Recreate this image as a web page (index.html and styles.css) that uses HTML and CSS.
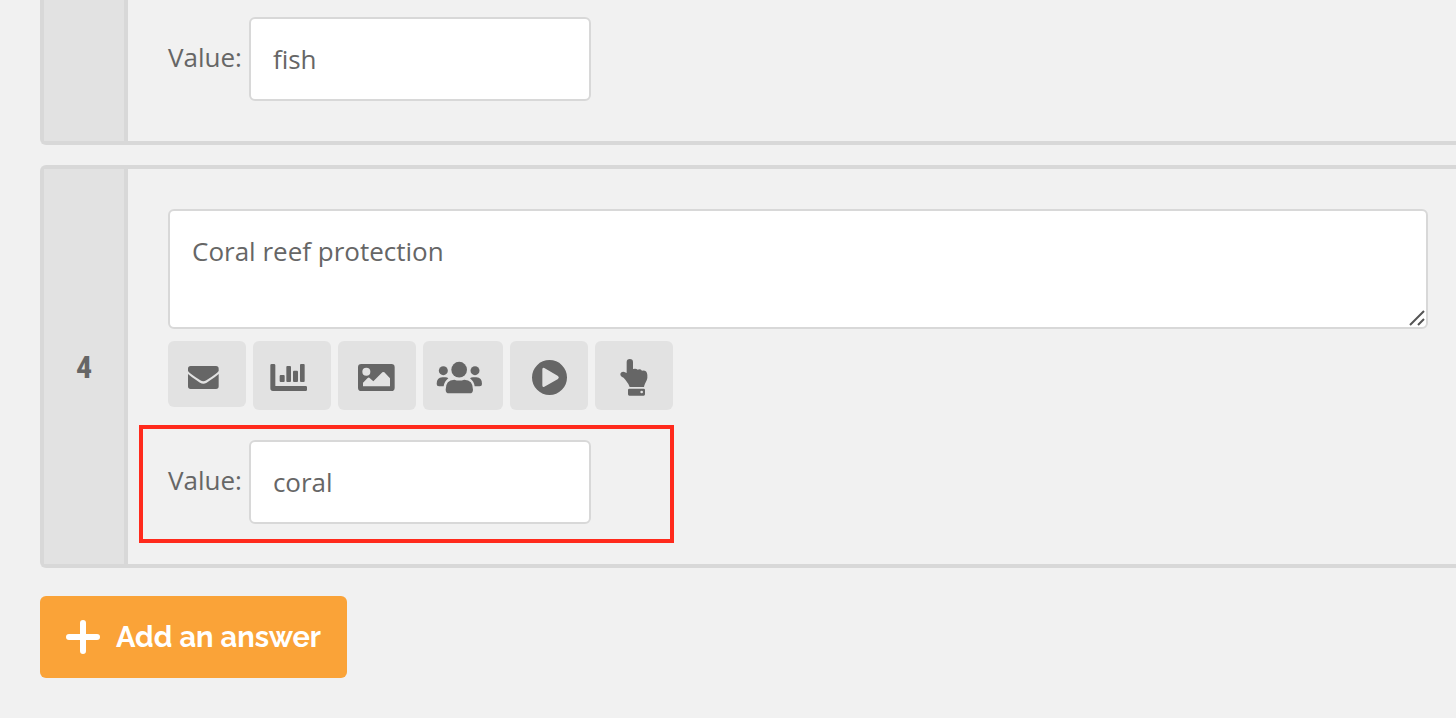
FILE: index.html
```html
<!DOCTYPE html>
<html lang="en">
<head>
<meta charset="utf-8">
<title>Answers</title>
<link rel="stylesheet" href="styles.css">
</head>
<body>
<main class="answers">
  <section class="answer answer-scrolled">
    <div class="answer-number"></div>
    <div class="answer-body">
      <div class="value-row">
        <label for="value-3">Value:</label>
        <input class="field value-input" id="value-3" type="text" value="fish">
      </div>
    </div>
  </section>

  <section class="answer">
    <div class="answer-number">4</div>
    <div class="answer-body">
      <div class="text-wrap">
        <textarea class="field answer-text" aria-label="Answer 4">Coral reef protection</textarea>
        <svg class="grip" viewBox="0 0 16 16" aria-hidden="true"><path d="M1 15L15 1M9 15l6-6"/></svg>
      </div>
      <div class="tools">
        <button class="tool tool-mail" type="button" aria-label="Email">
          <svg viewBox="24 18 234 198"><path d="M84 108V101Q84 93 92 93H168Q176 93 176 101V108Q172 115 139 136Q130 142 121 136Q88 115 84 108Z"/><path d="M84 117Q90 123 120 143Q130 149 140 143Q170 123 176 117V154Q176 162 168 162H92Q84 162 84 154Z"/></svg>
        </button>
        <button class="tool" type="button" aria-label="Chart">
          <svg viewBox="279 18 234 207"><path d="M331 91Q331 87 335 87H342Q346 87 346 91V153H437Q441 153 441 157V164Q441 168 437 168H339Q331 168 331 160Z"/><rect x="359" y="120" width="15" height="21" rx="3"/><rect x="379" y="93" width="14" height="48" rx="3"/><rect x="399" y="107" width="15" height="34" rx="3"/><rect x="420" y="87" width="14" height="54" rx="3"/></svg>
        </button>
        <button class="tool" type="button" aria-label="Image">
          <svg viewBox="537 18 234 207"><path fill-rule="evenodd" d="M607 87H697Q707 87 707 97V158Q707 168 697 168H607Q597 168 597 158V97Q597 87 607 87ZM622 98.500A12 12 0 1 0 622 122.500A12 12 0 1 0 622 98.500ZM612 154H693V130L676 112Q673 110 670 112L643 139L631 128Q628 127 626 129L612 143Z"/></svg>
        </button>
        <button class="tool tool-users" type="button" aria-label="Group">
          <svg viewBox="12 18 240 207"><circle cx="73" cy="107" r="13.500"/><circle cx="168" cy="107" r="13.500"/><circle cx="120.500" cy="104" r="23.500"/><path d="M53 147Q53 127 70 127H79Q85 127 88 130Q76 139 74 154H60Q53 154 53 147ZM189 147Q189 127 172 127H162Q156 127 153 130Q165 139 167 154H182Q189 154 189 147Z"/><path d="M80 164Q80 134 106 134Q120 139 136 134Q162 134 162 164Q162 175 152 175H90Q80 175 80 164Z"/></svg>
        </button>
        <button class="tool" type="button" aria-label="Play">
          <svg viewBox="273 18 234 207"><path fill-rule="evenodd" d="M391.500 75A52.500 52.500 0 1 0 391.500 180A52.500 52.500 0 1 0 391.500 75ZM370 103Q370 96 376 99L417 123Q422 127 417 132L376 155Q370 158 370 151Z"/></svg>
        </button>
        <button class="tool" type="button" aria-label="Call to action">
          <svg viewBox="531 18 234 207"><path d="M626 81Q626 72 635.500 72Q645 72 645 81V102Q654 99 659 104Q667 101 672 107Q687 105 688 120V129Q688 134 681 146Q679 150 678 156H635Q632 146 622 134Q617 126 611 125Q606 121 607 116Q610 109 619 111L626 114Z"/><path fill-rule="evenodd" d="M634 161H677Q681 161 681 165V178Q681 182 677 182H634Q630 182 630 178V165Q630 161 634 161ZM671 167A4 4 0 1 0 671 175A4 4 0 1 0 671 167Z"/></svg>
        </button>
      </div>
      <div class="value-row value-highlight">
        <label for="value-4">Value:</label>
        <input class="field value-input" id="value-4" type="text" value="coral">
      </div>
    </div>
  </section>

  <button class="add-answer" type="button">
    <svg class="plus" viewBox="0 0 34 34" aria-hidden="true"><path d="M17 3V31M3 17H31"/></svg>
    Add an answer
  </button>
</main>
</body>
</html>
```

FILE: styles.css
```css
*,
*::before {
  box-sizing: border-box;
}

body {
  margin: 0;
  background: #f1f1f1;
  color: #666;
  font-family: "Open Sans", "Noto Sans", sans-serif;
  font-size: 26px;
  line-height: 36px;
}

.answers {
  display: flex;
  flex-direction: column;
  align-items: flex-start;
  gap: 20px;
  padding: 0 0 40px 40px;
}

.answer {
  display: flex;
  align-self: stretch;
  border: 4px solid #d8d8d8;
  border-right: 0;
  border-radius: 6px 0 0 6px;
}

.answer-scrolled {
  border-top: 0;
  border-radius: 0 0 0 6px;
}

.answer-number {
  display: flex;
  flex: none;
  align-items: center;
  justify-content: center;
  width: 84px;
  border-right: 4px solid #d8d8d8;
  background: #e2e2e2;
  font-family: "Liberation Sans Narrow", "Roboto Condensed", Roboto, sans-serif;
  font-size: 32px;
  font-weight: 700;
}

.answer-body {
  flex: 1;
  min-width: 0;
  padding: 40px 28px 40px 40px;
}

.answer-scrolled .answer-body {
  padding-top: 17px;
}

.field {
  border: 2px solid #d8d8d8;
  border-radius: 6px;
  background: #fff;
  color: #666;
  font: inherit;
  outline: 0;
}

.text-wrap {
  position: relative;
  display: flex;
}

.answer-text {
  flex: 1;
  height: 120px;
  padding: 22px;
  resize: none;
}

.grip {
  position: absolute;
  right: 3px;
  bottom: 3px;
  width: 16px;
  height: 16px;
  fill: none;
  stroke: #555;
  stroke-width: 2;
}

.tools {
  display: flex;
  align-items: flex-start;
  gap: 7px;
  margin: 12px 0 30px;
}

.tool {
  width: 78px;
  height: 69px;
  padding: 0;
  border: 0;
  border-radius: 6px;
  background: #e2e2e2;
}

.tool-mail {
  height: 66px;
}

.tool-users {
  width: 80px;
}

.tool svg {
  display: block;
  width: 100%;
  height: 100%;
  fill: #666;
}

.value-row {
  position: relative;
  display: flex;
  align-items: center;
  gap: 7px;
}

.value-row label {
  padding-bottom: 4px;
}

.value-input {
  width: 342px;
  height: 84px;
  padding: 0 22px;
}

.value-highlight::before {
  content: "";
  position: absolute;
  top: -15px;
  left: -29px;
  width: 535px;
  height: 118px;
  border: 4px solid #ff2a1c;
  pointer-events: none;
}

.add-answer {
  display: flex;
  align-items: center;
  gap: 16px;
  height: 82px;
  margin-top: 8px;
  padding: 0 26px;
  border: 0;
  border-radius: 6px;
  background: #faa338;
  color: #fff;
  font-family: Raleway, Lato, sans-serif;
  font-size: 29px;
  font-weight: 700;
}

.plus {
  width: 34px;
  height: 34px;
  fill: none;
  stroke: #fff;
  stroke-width: 6;
  stroke-linecap: round;
}
```
